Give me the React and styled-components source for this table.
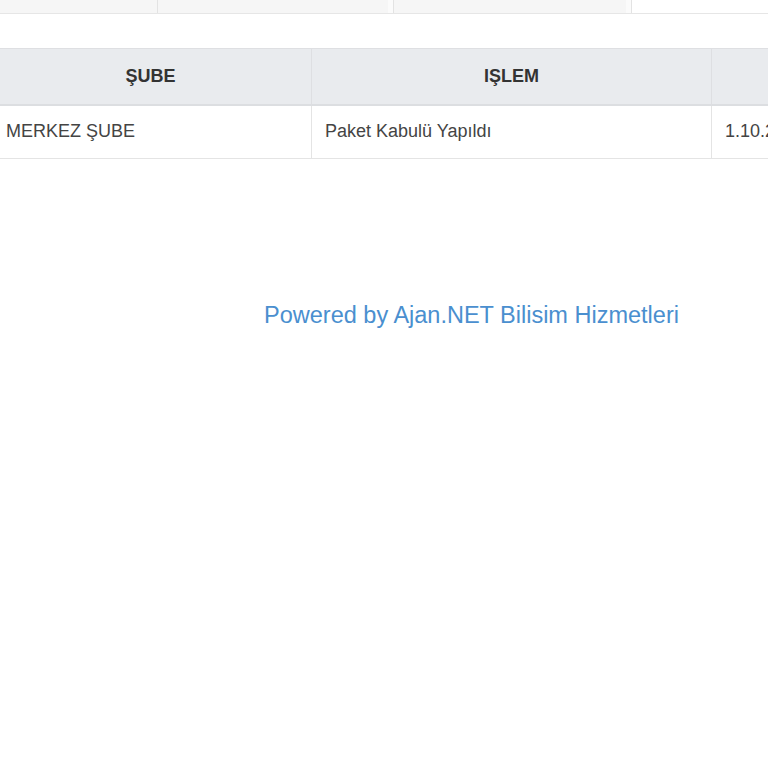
import React from 'react';
import styled, { createGlobalStyle } from 'styled-components';

const GlobalStyle = createGlobalStyle`
  html, body {
    margin: 0;
    padding: 0;
    background: #fff;
    overflow: hidden;
  }
  body {
    font-family: "Liberation Sans", Arial, Helvetica, sans-serif;
    color: #333;
  }
`;

const Page = styled.div`
  width: 965px;
  margin-left: -11px;
`;

const PrevTable = styled.div`
  display: flex;
  height: 13px;
  border-bottom: 1px solid #e6e6e6;
`;

const PrevCell = styled.div`
  width: ${(p) => p.$w}px;
  flex: ${(p) => (p.$grow ? 1 : 'none')};
  background: ${(p) => (p.$plain ? '#fff' : '#f6f6f6')};
  border-right: 1px solid #e3e3e3;
  box-shadow: ${(p) => (p.$inner ? 'inset -5px 0 0 #fbfbfb' : 'none')};
`;

const Table = styled.table`
  margin-top: 34px;
  width: 100%;
  border-collapse: collapse;
  font-size: 18px;
  table-layout: fixed;
`;

const Th = styled.th`
  width: ${(p) => p.$w}px;
  height: 56px;
  padding: 0 15px;
  box-sizing: border-box;
  background: #e9ebee;
  border: 1px solid #dedfe2;
  border-bottom: 2px solid #dcdee1;
  font-weight: bold;
  color: #333;
  text-align: center;
`;

const Td = styled.td`
  height: 54px;
  padding: 0 15px 0 ${(p) => p.$pl || 13}px;
  box-sizing: border-box;
  border: 1px solid #e4e4e4;
  color: #444;
  white-space: nowrap;
  overflow: hidden;
`;

const Footer = styled.div`
  margin-top: 143px;
  text-align: center;
  font-size: 23.5px;
  color: #4a8fcf;
`;

export default function App() {
  return (
    <>
      <GlobalStyle />
      <Page>
        <PrevTable>
          <PrevCell $w={168} />
          <PrevCell $w={235} $inner />
          <PrevCell $w={237} $inner />
          <PrevCell $grow $plain />
        </PrevTable>
        <Table>
          <thead>
            <tr>
              <Th $w={322}>ŞUBE</Th>
              <Th $w={400}>IŞLEM</Th>
              <Th>TARİH</Th>
            </tr>
          </thead>
          <tbody>
            <tr>
              <Td $pl={16}>MERKEZ ŞUBE</Td>
              <Td>Paket Kabulü Yapıldı</Td>
              <Td>1.10.2019 14:32</Td>
            </tr>
          </tbody>
        </Table>
        <Footer>Powered by Ajan.NET Bilisim Hizmetleri</Footer>
      </Page>
    </>
  );
}
